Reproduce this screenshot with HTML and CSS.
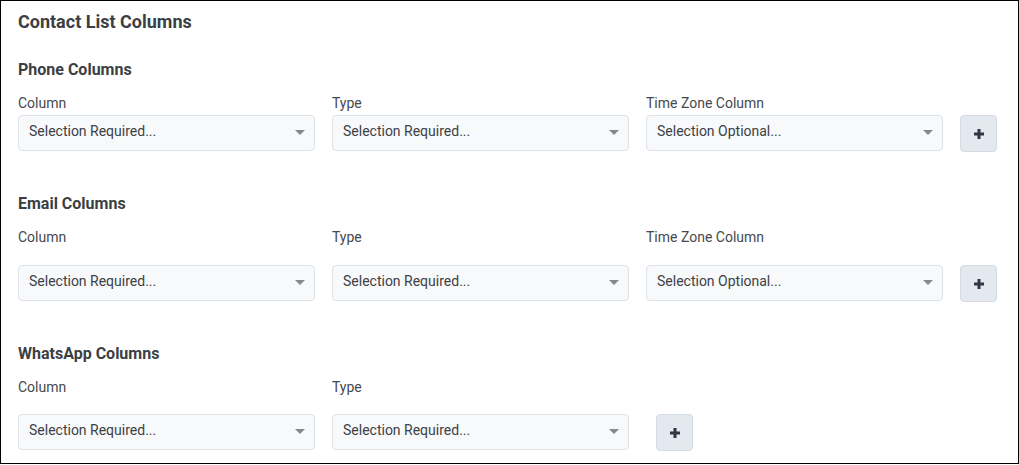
FILE: index.html
```html
<!DOCTYPE html>
<html lang="en">
<head>
<meta charset="utf-8">
<title>Contact List Columns</title>
<link rel="stylesheet" href="styles.css">
</head>
<body>
<div class="panel">
  <h1 class="title">Contact List Columns</h1>

  <section class="group">
    <h2 class="group-title">Phone Columns</h2>
    <div class="row">
      <div class="field">
        <label class="label">Column</label>
        <div class="select"><span>Selection Required...</span><i class="caret"></i></div>
      </div>
      <div class="field">
        <label class="label">Type</label>
        <div class="select"><span>Selection Required...</span><i class="caret"></i></div>
      </div>
      <div class="field">
        <label class="label">Time Zone Column</label>
        <div class="select"><span>Selection Optional...</span><i class="caret"></i></div>
      </div>
      <button class="add" type="button" aria-label="Add">
        <svg width="12" height="12" viewBox="0 0 12 12"><path d="M6 1v10M1 6h10" stroke="currentColor" stroke-width="3"/></svg>
      </button>
    </div>
  </section>

  <section class="group">
    <h2 class="group-title">Email Columns</h2>
    <div class="row row-loose">
      <div class="field">
        <label class="label">Column</label>
        <div class="select"><span>Selection Required...</span><i class="caret"></i></div>
      </div>
      <div class="field">
        <label class="label">Type</label>
        <div class="select"><span>Selection Required...</span><i class="caret"></i></div>
      </div>
      <div class="field">
        <label class="label">Time Zone Column</label>
        <div class="select"><span>Selection Optional...</span><i class="caret"></i></div>
      </div>
      <button class="add" type="button" aria-label="Add">
        <svg width="12" height="12" viewBox="0 0 12 12"><path d="M6 1v10M1 6h10" stroke="currentColor" stroke-width="3"/></svg>
      </button>
    </div>
  </section>

  <section class="group">
    <h2 class="group-title">WhatsApp Columns</h2>
    <div class="row row-loose row-last">
      <div class="field">
        <label class="label">Column</label>
        <div class="select"><span>Selection Required...</span><i class="caret"></i></div>
      </div>
      <div class="field">
        <label class="label">Type</label>
        <div class="select"><span>Selection Required...</span><i class="caret"></i></div>
      </div>
      <button class="add add-short" type="button" aria-label="Add">
        <svg width="12" height="12" viewBox="0 0 12 12"><path d="M6 1v10M1 6h10" stroke="currentColor" stroke-width="3"/></svg>
      </button>
    </div>
  </section>
</div>
</body>
</html>
```

FILE: styles.css
```css
* { box-sizing: border-box; }

html, body {
  margin: 0;
  padding: 0;
  background: #ffffff;
}

body {
  font-family: Roboto, "Liberation Sans", Arial, sans-serif;
  color: #3d4145;
}

.panel {
  width: 1019px;
  height: 464px;
  border: 1px solid #000000;
  padding: 9px 21px 0 17px;
  overflow: hidden;
}

.title {
  margin: 0;
  font-size: 18px;
  line-height: 24px;
  font-weight: 700;
  color: #3b3f44;
}

.group {
  margin-top: 26px;
}

.group + .group {
  margin-top: 43px;
}

.group-title {
  margin: 0 0 15px;
  font-size: 16px;
  line-height: 20px;
  font-weight: 700;
  color: #3b3f44;
}

.row {
  display: flex;
  align-items: flex-end;
  gap: 17px;
}

.field {
  width: 297px;
  display: flex;
  flex-direction: column;
}

.label {
  font-size: 14px;
  line-height: 16px;
  color: #45494e;
  margin-bottom: 4px;
}

.row-loose .label {
  margin-bottom: 20px;
}

.row-last .label {
  margin-bottom: 19px;
}

.select {
  position: relative;
  height: 36px;
  border: 1px solid #dde2e8;
  border-radius: 4px;
  background: #f7f9fb;
  display: flex;
  align-items: center;
  padding: 0 10px 4px;
  font-size: 14px;
  color: #3d4145;
}

.caret {
  position: absolute;
  right: 9px;
  top: 14px;
  width: 0;
  height: 0;
  border-left: 5px solid transparent;
  border-right: 5px solid transparent;
  border-top: 5px solid #85898e;
}

.add {
  width: 37px;
  height: 37px;
  margin-bottom: -1px;
  border: 1px solid #d5dbe3;
  border-radius: 4px;
  background: #e4e9f0;
  color: #2f3742;
  display: flex;
  align-items: center;
  justify-content: center;
  padding: 0;
}

.add-short {
  margin-left: 10px;
}
```
